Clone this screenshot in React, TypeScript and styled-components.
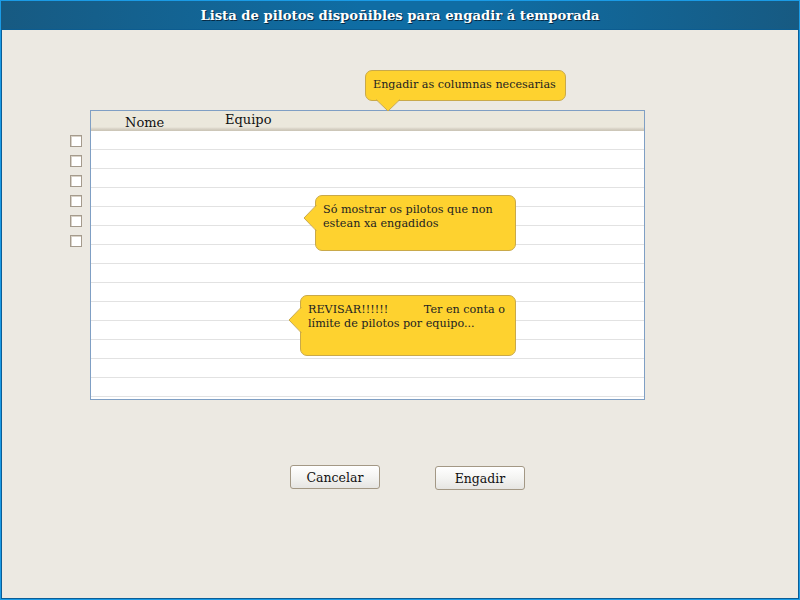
import * as React from "react";
import styled, { createGlobalStyle } from "styled-components";

const GlobalStyle = createGlobalStyle`
  html, body {
    margin: 0;
    padding: 0;
    width: 800px;
    height: 600px;
    overflow: hidden;
    background: #ece9e2;
  }
  * { box-sizing: border-box; }
`;

const Window = styled.div`
  width: 800px;
  height: 600px;
  display: flex;
  flex-direction: column;
  background: #ece9e2;
  border: 1px solid #1a9be6;
  box-shadow: inset 1px 0 0 #0b5d96, inset -1px 0 0 #0b5d96, inset 0 -1px 0 #0b5d96;
  font-family: "DejaVu Serif", "Liberation Serif", serif;
  color: #111;
`;

const TitleBar = styled.div`
  height: 29px;
  flex: none;
  display: flex;
  align-items: center;
  justify-content: center;
  background: linear-gradient(to right, #175a82 0%, #0f6da4 45%, #0f6da4 60%, #175a82 100%);
  color: #fff;
  font-weight: bold;
  font-size: 13.2px;
  text-shadow: 1px 1px 0 #062a44;
  border-bottom: 1px solid #0c5c90;
`;

const Body = styled.div`
  flex: 1;
  display: flex;
  flex-direction: column;
  padding: 80px 0 0 67px;
  margin: 0 2px 2px 2px;
  position: relative;
`;

const TableArea = styled.div`
  display: flex;
  align-items: flex-start;
`;

const CheckColumn = styled.div`
  display: flex;
  flex-direction: column;
  gap: 8px;
  padding-top: 25px;
  width: 20px;
`;

const CheckBox = styled.span`
  display: block;
  width: 12px;
  height: 12px;
  background: #fff;
  border: 1px solid #a59b8d;
  box-shadow: inset 1px 1px 0 #d8d2c8;
`;

const Table = styled.div`
  width: 555px;
  height: 290px;
  border: 1px solid #7f9fc4;
  background: #fff;
  overflow: hidden;
`;

const Header = styled.div`
  height: 20px;
  display: flex;
  background: linear-gradient(to bottom, #ebe8dc 0%, #ebe8dc 80%, #d6d1c4 90%, #c9c3b4 100%);
  font-size: 13px;
`;

const HeaderCell = styled.div<{ width: number; lift: number; indent: number }>`
  width: ${(p) => p.width}px;
  padding-top: ${(p) => 5 - p.lift}px;
  padding-left: ${(p) => p.indent}px;
  line-height: 14px;
`;

const Row = styled.div`
  height: 19px;
  border-bottom: 1px solid #e2e2e2;
`;

const Buttons = styled.div`
  display: flex;
  gap: 55px;
  padding: 65px 0 0 220px;
`;

const Button = styled.button<{ drop?: number }>`
  width: 90px;
  height: 24px;
  margin-top: ${(p) => p.drop || 0}px;
  font-family: "DejaVu Serif", "Liberation Serif", serif;
  font-size: 12.5px;
  color: #111;
  background: linear-gradient(to bottom, #ffffff 0%, #f4f4f2 50%, #e6e5e2 100%);
  border: 1px solid #a39885;
  border-radius: 3px;
  padding: 0;
`;

const Bubble = styled.div<{ x: number; y: number; w: number; h: number }>`
  position: absolute;
  left: ${(p) => p.x}px;
  top: ${(p) => p.y}px;
  width: ${(p) => p.w}px;
  height: ${(p) => p.h}px;
  background: #fed22f;
  border: 1px solid #c9a94a;
  border-radius: 7px;
  font-size: 11.2px;
  line-height: 14px;
  color: #222;
  padding: 7px 7px;
  white-space: pre-wrap;
`;

const Arrow = styled.svg`
  position: absolute;
  overflow: visible;
`;

const DownArrow = () => (
  <Arrow width="24" height="14" style={{ left: 10, bottom: -13 }}>
    <polygon points="0,0 24,0 12,12" fill="#fed22f" />
    <polyline points="0,0.5 12,12 24,0.5" fill="none" stroke="#c9a94a" />
  </Arrow>
);

const LeftArrow = ({ top }: { top: number }) => (
  <Arrow width="14" height="26" style={{ left: -13, top }}>
    <polygon points="14,0 1,13 14,26" fill="#fed22f" />
    <polyline points="13.5,0 1,13 13.5,26" fill="none" stroke="#c9a94a" />
  </Arrow>
);

const rows = Array.from({ length: 15 });
const checks = Array.from({ length: 6 });

export default function App() {
  return (
    <>
      <GlobalStyle />
      <Window>
        <TitleBar>Lista de pilotos dispoñibles para engadir á temporada</TitleBar>
        <Body>
          <TableArea>
            <CheckColumn>
              {checks.map((_, i) => (
                <CheckBox key={i} />
              ))}
            </CheckColumn>
            <Table>
              <Header>
                <HeaderCell width={104} lift={0} indent={34}>
                  Nome
                </HeaderCell>
                <HeaderCell width={200} lift={3} indent={30}>
                  Equipo
                </HeaderCell>
              </Header>
              {rows.map((_, i) => (
                <Row key={i} />
              ))}
            </Table>
          </TableArea>
          <Buttons>
            <Button>Cancelar</Button>
            <Button drop={1}>Engadir</Button>
          </Buttons>

          <Bubble x={362} y={40} w={201} h={31}>
            Engadir as columnas necesarias
            <DownArrow />
          </Bubble>
          <Bubble x={312} y={165} w={201} h={56}>
            {"Só mostrar os pilotos que non estean xa engadidos"}
            <LeftArrow top={9} />
          </Bubble>
          <Bubble x={297} y={265} w={216} h={61}>
            {"REVISAR!!!!!!          Ter en conta o límite de pilotos por equipo..."}
            <LeftArrow top={11} />
          </Bubble>
        </Body>
      </Window>
    </>
  );
}
